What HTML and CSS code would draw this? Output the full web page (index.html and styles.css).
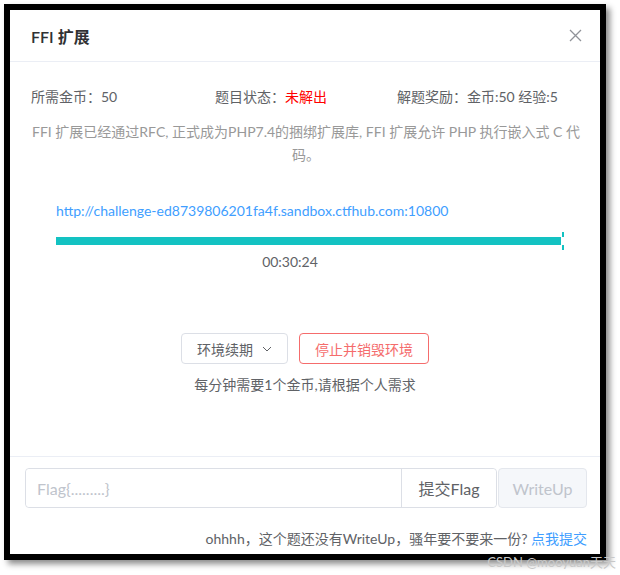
FILE: index.html
```html
<!DOCTYPE html>
<html lang="zh-CN">
<head>
  <meta charset="UTF-8">
  <title>FFI 扩展</title>
  <link rel="stylesheet" href="styles.css">
</head>
<body>

  <div class="dialog">
    <div class="dialog-header">
      <span class="dialog-title">FFI 扩展</span>
      <svg class="close-icon" width="13" height="13" viewBox="0 0 13 13">
        <path d="M1 1 L12 12 M12 1 L1 12" stroke="#909399" stroke-width="1.3" fill="none"/>
      </svg>
    </div>

    <div class="dialog-body">
      <div class="info-row">
        <span>所需金币：50</span>
        <span>题目状态：<em class="unsolved">未解出</em></span>
        <span>解题奖励：金币:50 经验:5</span>
      </div>

      <p class="desc">FFI 扩展已经通过RFC, 正式成为PHP7.4的捆绑扩展库, FFI 扩展允许 PHP 执行嵌入式 C 代码。</p>

      <div class="env">
        <a class="env-link">http://challenge-ed8739806201fa4f.sandbox.ctfhub.com:10800</a>
        <div class="progress">
          <div class="progress-bar"></div>
          <div class="progress-end"></div>
        </div>
        <div class="countdown">00:30:24</div>
      </div>

      <div class="actions">
        <button class="btn">环境续期
          <svg width="10" height="6" viewBox="0 0 10 6"><path d="M1 1 L5 5 L9 1" stroke="#606266" stroke-width="1" fill="none"/></svg>
        </button>
        <button class="btn btn-danger">停止并销毁环境</button>
      </div>
      <p class="tip">每分钟需要1个金币,请根据个人需求</p>
    </div>

    <div class="dialog-footer">
      <div class="flag-row">
        <div class="flag-group">
          <input class="flag-input" placeholder="Flag{.........}">
          <button class="flag-submit">提交Flag</button>
        </div>
        <button class="btn-writeup" disabled>WriteUp</button>
      </div>
      <p class="writeup-tip">ohhhh，这个题还没有WriteUp，骚年要不要来一份? <a class="writeup-link">点我提交</a></p>
    </div>
  </div>

  <div class="watermark">CSDN @mooyuan天天</div>

</body>
</html>
```

FILE: styles.css
```css
* {
  margin: 0;
  padding: 0;
  box-sizing: border-box;
  font-family: Lato, "Noto Sans CJK SC", sans-serif;
}

body {
  background: #fff;
  width: 620px;
  height: 575px;
  padding: 4px 0 0 4px;
  position: relative;
  overflow: hidden;
}

.dialog {
  width: 602px;
  height: 556px;
  border: 6px solid #000;
  background: #fff;
  box-shadow: 4px 4px 6px rgba(0, 0, 0, 0.45);
  display: flex;
  flex-direction: column;
}

.dialog-header {
  height: 52px;
  display: flex;
  align-items: center;
  justify-content: space-between;
  padding: 0 18px 0 21px;
  border-bottom: 1px solid #ebeef5;
}

.dialog-title {
  font-size: 16px;
  font-weight: 600;
  color: #303133;
}

.close-icon {
  display: block;
}

.dialog-body {
  flex: 1;
  padding-top: 25px;
  font-size: 14px;
  color: #606266;
}

.info-row {
  display: grid;
  grid-template-columns: 184px 182px 1fr;
  padding: 0 21px;
  line-height: 20px;
}

.unsolved {
  font-style: normal;
  color: #ff0000;
}

.desc {
  margin-top: 13px;
  padding: 0 19px 0 21px;
  text-align: center;
  line-height: 23px;
  color: #999;
}

.env {
  margin: 35px 36px 0 46px;
}

.env-link {
  display: block;
  line-height: 20px;
  color: #409eff;
}

.progress {
  margin-top: 11px;
  height: 18px;
  display: flex;
  align-items: center;
}

.progress-bar {
  flex: 1;
  height: 8px;
  background: #13c2c2;
}

.progress-end {
  width: 2px;
  height: 18px;
  margin-left: 1px;
  background: linear-gradient(#13c2c2 0 5px, transparent 5px 13px, #13c2c2 13px);
}

.countdown {
  margin-top: 2px;
  padding-right: 40px;
  text-align: center;
  line-height: 20px;
}

.actions {
  margin-top: 61px;
  display: flex;
  justify-content: center;
  gap: 11px;
}

.btn {
  height: 31px;
  padding: 0 15px;
  display: flex;
  align-items: center;
  gap: 9px;
  font-size: 14px;
  color: #606266;
  background: #fff;
  border: 1px solid #dcdfe6;
  border-radius: 4px;
}

.btn-danger {
  color: #f56c6c;
  border-color: #f56c6c;
}

.tip {
  margin-top: 11px;
  text-align: center;
  line-height: 20px;
}

.dialog-footer {
  border-top: 1px solid #ebeef5;
  padding: 11px 13px 5px 15px;
}

.flag-row {
  display: flex;
  gap: 1px;
  height: 40px;
}

.flag-group {
  flex: 1;
  display: flex;
  border: 1px solid #dcdfe6;
  border-radius: 4px;
}

.flag-input {
  flex: 1;
  border: none;
  border-right: 1px solid #dcdfe6;
  border-radius: 4px 0 0 4px;
  padding: 0 11px;
  font-size: 16px;
  color: #606266;
  outline: none;
}

.flag-input::placeholder {
  color: #c0c4cc;
}

.flag-submit {
  width: 94px;
  border: none;
  background: #fff;
  border-radius: 0 4px 4px 0;
  font-size: 16px;
  color: #606266;
}

.btn-writeup {
  width: 89px;
  font-size: 16px;
  color: #c0c4cc;
  background: #f5f7fa;
  border: 1px solid #e4e7ed;
  border-radius: 4px;
}

.writeup-tip {
  margin-top: 21px;
  text-align: right;
  line-height: 20px;
  font-size: 14px;
  color: #606266;
}

.writeup-link {
  color: #409eff;
}

.watermark {
  position: absolute;
  right: 4px;
  bottom: 4px;
  font-size: 13px;
  color: #c8c8c8;
}
```
